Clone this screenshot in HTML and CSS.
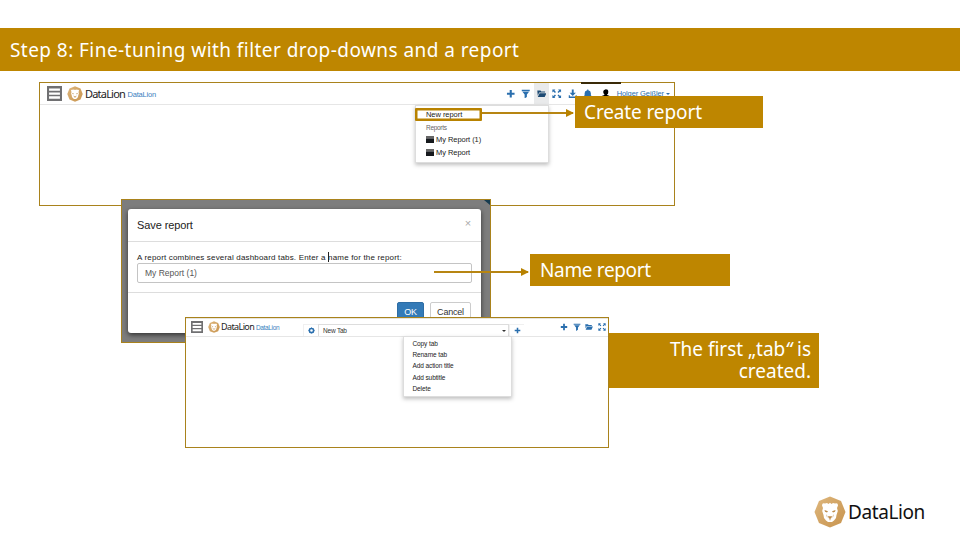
FILE: index.html
```html
<!DOCTYPE html>
<html lang="en">
<head>
<meta charset="utf-8">
<title>Step 8: Fine-tuning with filter drop-downs and a report</title>
<link rel="stylesheet" href="styles.css">
</head>
<body>
<svg class="defs" width="0" height="0" aria-hidden="true">
  <defs>
    <linearGradient id="gold" x1="0" y1="0" x2="1" y2="1">
      <stop offset="0" stop-color="#dfb87e"/><stop offset=".5" stop-color="#d2a464"/><stop offset="1" stop-color="#c99550"/>
    </linearGradient>
  </defs>
  <symbol id="lion" viewBox="0 0 32 32">
    <path fill="url(#gold)" d="M16 .5 27 5l4.500 11L27 27l-11 4.500L5 27 .5 16 5 5z"/>
    <path fill="#fff" d="M8 9.500Q8 6.500 11 7.500L13 7l1.500 1L16 6.800 17.500 8 19 7l2 .5q3-1 3 2l-1 2.500.8 3-1.300 4-.5 3-2 2.500L18 26h-4l-2-1.500L10 22l-.5-3-1.300-4 .8-3z"/>
    <path fill="#bd8b4a" d="m10.500 14 3.500 1.300-1 1.200-2-.7zm11 0L18 15.300l1 1.200 2-.7zM13.800 20.300h4.400l-1.200 2.200h-2zM15.600 22h.8v2.200h-.8zM12.300 18l1 2-.2 2zm7.400 0-1 2 .2 2z"/>
  </symbol>
  <symbol id="menu" viewBox="0 0 16 16">
    <path fill="#707072" d="M0 0h16v16H0z"/><path fill="#fff" d="M2.200 2.600h11.600v2.500H2.200zM2.200 6.800h11.600v2.500H2.200zM2.200 11h11.600v2.500H2.200z"/>
  </symbol>
  <symbol id="plus" viewBox="0 0 10 10"><path d="M3.900 1h2.200v2.900H9v2.200H6.100V9H3.900V6.100H1V3.900h2.900z"/></symbol>
  <symbol id="filter" viewBox="0 0 10 10"><path d="M.8.800h8.400v1.500H.8zM1.500 2.900h7L6.200 5.700v2.800L3.800 9.900V5.700z"/></symbol>
  <symbol id="folder" viewBox="0 0 10 10"><path d="M.3 1.500h3.400l.8 1h4v1.300H2.300L.8 7zM2.700 4.500h7.200L8.100 8.500H.8z"/></symbol>
  <symbol id="expand" viewBox="0 0 10 10"><path d="M.4.4h3.200L2.600 1.500l1.600 1.600-1.100 1.100-1.600-1.600L.4 3.600zM9.600.4H6.400l1 1.100-1.600 1.600 1.100 1.100 1.600-1.600 1.100 1zM.4 9.600h3.200l-1-1.100 1.600-1.600-1.100-1.100-1.600 1.600-1.100-1zM9.600 9.600H6.400l1-1.100-1.600-1.600 1.100-1.100 1.600 1.600 1.100-1z"/></symbol>
  <symbol id="download" viewBox="0 0 10 10"><path d="M4 .5h2V4h2.300L5 7.300 1.700 4H4zM.8 6.500H2V8h6V6.500h1.200v3H.8z"/></symbol>
  <symbol id="bell" viewBox="0 0 10 10"><path d="M4.400.5h1.200v.8Q8.300 1.800 8.300 4.500v2L9.500 8H.5l1.200-1.500v-2q0-2.700 2.700-3.200zM4 8.500h2L5 9.700z"/></symbol>
  <symbol id="user" viewBox="0 0 10 10"><path d="M5 .2q2.700 0 2.700 2.600T6.500 5.600v.6q3.500.6 3.500 3.400H0q0-2.800 3.500-3.400v-.6Q2.300 4.700 2.300 2.800T5 .2z"/></symbol>
  <symbol id="gear" viewBox="0 0 10 10"><circle cx="5" cy="5" r="3" fill="none" stroke="currentColor" stroke-width="2.200"/><path fill="none" stroke="currentColor" d="M5 .4v1M5 8.600v1M.4 5h1M8.600 5h1M1.700 1.700l.8.8M7.500 7.500l.8.8M8.300 1.700l-.8.8M1.700 8.300l.8-.8"/></symbol>
  <symbol id="board" viewBox="0 0 8 7"><path fill="#666" d="M0 0h8v2H0z"/><path fill="#16191d" d="M0 2.300h8V7H0z"/></symbol>
</svg>

<main class="slide">
  <h1 class="title"><span>Step 8: Fine-tuning with filter drop-downs and a report</span></h1>

  <section class="shot shot-menu">
    <header class="bar">
      <svg class="burger"><use href="#menu"/></svg>
      <svg class="lion"><use href="#lion"/></svg>
      <span class="brand">DataLion</span>
      <span class="project">DataLion</span>
      <nav class="tools">
        <i><svg><use href="#plus"/></svg></i>
        <i><svg><use href="#filter"/></svg></i>
        <i class="active"><svg><use href="#folder"/></svg></i>
        <i><svg><use href="#expand"/></svg></i>
        <i><svg><use href="#download"/></svg></i>
        <i><svg><use href="#bell"/></svg></i>
        <i class="person"><svg><use href="#user"/></svg></i>
        <span class="user">Holger Geißler</span><b class="caret"></b>
      </nav>
    </header>
    <span class="notch"></span>
    <ul class="menu reports">
      <li class="new">New report</li>
      <li class="head">Reports</li>
      <li><svg><use href="#board"/></svg>My Report (1)</li>
      <li><svg><use href="#board"/></svg>My Report</li>
    </ul>
  </section>

  <section class="shot shot-dialog">
    <span class="corner"></span>
    <div class="dialog">
      <header><span>Save report</span><b>×</b></header>
      <div class="body">
        <label>A report combines several dashboard tabs. Enter a <em></em>name for the report:</label>
        <div class="field">My Report (1)</div>
      </div>
      <footer><span class="btn ok">OK</span><span class="btn">Cancel</span></footer>
    </div>
  </section>

  <section class="shot shot-tab">
    <header class="bar">
      <svg class="burger"><use href="#menu"/></svg>
      <svg class="lion"><use href="#lion"/></svg>
      <span class="brand">DataLion</span>
      <span class="project">DataLion</span>
      <span class="cell"><svg><use href="#gear"/></svg></span>
      <div class="select"><span>New Tab</span><b class="caret"></b></div>
      <span class="cell add"><svg><use href="#plus"/></svg></span>
      <nav class="tools">
        <i><svg><use href="#plus"/></svg></i>
        <i><svg><use href="#filter"/></svg></i>
        <i><svg><use href="#folder"/></svg></i>
        <i><svg><use href="#expand"/></svg></i>
      </nav>
    </header>
    <ul class="menu tabs">
      <li>Copy tab</li><li>Rename tab</li><li>Add action title</li><li>Add subtitle</li><li>Delete</li>
    </ul>
  </section>

  <span class="highlight"></span>
  <span class="arrow arrow-create"></span>
  <span class="arrow arrow-name"></span>
  <div class="callout create"><span>Create report</span></div>
  <div class="callout name"><span>Name report</span></div>
  <div class="callout first"><span>The first „tab<q>“</q> is<br>created.</span></div>

  <footer class="logo"><svg><use href="#lion"/></svg><span>DataLion</span></footer>
</main>
</body>
</html>
```
FILE: styles.css
```css
* { box-sizing: border-box; }
body { margin: 0; background: #fff; }
.defs { position: absolute; }
.slide {
  position: relative;
  width: 960px; height: 540px;
  padding-top: 28px;
  overflow: hidden;
  font-family: "Liberation Sans", Arial, sans-serif;
  white-space: nowrap;
}
.title {
  display: flex; align-items: center;
  height: 43px; margin: 0; padding: 2px 0 0 10px;
  background: #be8600; color: #fff;
  font: 400 19px/41px "Noto Sans", sans-serif;
  letter-spacing: .44px;
}
.shot { position: absolute; border: 1px solid #a9821c; background: #fff; }
.shot-menu { left: 39px; top: 82px; width: 636px; height: 124px; }
.shot-dialog { left: 121px; top: 199px; width: 370px; height: 144px; background: #7d7d7d; overflow: hidden; }
.shot-tab { left: 185px; top: 317px; width: 424px; height: 131px; }

.bar { display: flex; align-items: center; height: 22px; border-bottom: 1px solid #e6e6e6; padding-left: 7px; }
.bar > * { flex-shrink: 0; }
.burger { width: 15px; height: 15px; }
.lion { width: 16px; height: 16px; margin-left: 5px; }
.brand { margin-left: 2px; color: #222; font: 11px/14px "Noto Sans", sans-serif; letter-spacing: -.8px; width: 42.500px; }
.project { color: #3b7fc0; font-size: 7.500px; letter-spacing: -.2px; padding-top: 1px; }
.tools { display: flex; align-items: center; height: 100%; margin-left: auto; color: #2a6fae; }
.tools i { display: flex; align-items: center; justify-content: center; width: 15.500px; height: 100%; }
.tools svg { width: 9.500px; height: 9.500px; fill: currentColor; }
.tools .active { background: #e9eaeb; color: #1d4a73; }
.tools .person { width: 21px; color: #000; }
.user { font-size: 7.500px; letter-spacing: -.1px; }
.caret { width: 0; height: 0; border: 2px solid transparent; border-top: 2.500px solid currentColor; border-bottom: 0; margin: 1px 4px 0 2px; }
.notch { position: absolute; left: 541px; top: -1px; width: 40px; height: 1.500px; background: #3a2a08; }

.menu {
  position: absolute; margin: 0; padding: 0; list-style: none;
  background: #fff; border: 1px solid #ddd;
  box-shadow: 0 2px 4px rgba(0,0,0,.25);
  color: #222; font-size: 7.500px;
}
.reports { left: 375px; top: 22px; width: 134px; height: 58px; padding: 2px 0 0 10px; }
.reports li { display: flex; align-items: center; height: 13px; letter-spacing: -.05px; }
.reports .new { height: 13px; }
.reports .head { font-size: 6.500px; color: #666; height: 12px; letter-spacing: -.3px; }
.reports svg { width: 8px; height: 7px; margin-right: 2px; }

.dialog {
  width: 353px; height: 124px; margin: 9px 0 0 6px;
  background: #fff; border-radius: 3px; box-shadow: 0 2px 5px rgba(0,0,0,.6);
  color: #222; font-size: 8px;
}
.dialog header { display: flex; justify-content: space-between; height: 33px; padding: 9px 10px 0 9px; border-bottom: 1px solid #ddd; font-size: 11px; line-height: 15px; letter-spacing: -.1px; }
.dialog header b { color: #aaa; font-weight: 400; line-height: 10px; }
.body { height: 51px; padding: 10px 9px 0; border-bottom: 1px solid #ddd; }
.body label { display: block; line-height: 10px; letter-spacing: .175px; }
.body em { display: inline-block; width: 1px; height: 10px; margin-right: -1px; background: #222; vertical-align: -2px; }
.field { height: 20px; border: 1px solid #c4c4c4; border-radius: 2px; padding-left: 7px; line-height: 18px; font-size: 8.500px; color: #555; }
.dialog footer { display: flex; justify-content: flex-end; gap: 6px; padding: 9px 10px 0; }
.btn { height: 20px; width: 41px; border: 1px solid #ccc; border-radius: 2px; text-align: center; font-size: 9px; line-height: 19px; color: #333; letter-spacing: -.2px; }
.btn.ok { width: 27px; background: #337ab7; border-color: #2e6da4; color: #fff; }
.corner { position: absolute; right: 0; top: 0; width: 6px; height: 5px; background: #173c50; clip-path: polygon(0 0,100% 0,100% 100%,60% 60%); }

.shot-tab .bar { height: 19px; padding-left: 5px; box-shadow: inset 0 1px #e6e4de; }
.shot-tab .burger { width: 12px; height: 12px; }
.shot-tab .lion { width: 12px; height: 12px; }
.shot-tab .brand { margin-left: 1px; width: 35px; font-size: 9px; letter-spacing: -.6px; }
.shot-tab .project { font-size: 6.500px; width: 47px; letter-spacing: -.35px; }
.cell { display: flex; align-items: center; justify-content: center; width: 15px; height: 12px; align-self: flex-end; color: #2a6fae; border: 1px solid #f0f0f0; border-width: 1px 0 0 1px; }
.cell svg { width: 7px; height: 7px; fill: currentColor; }
.select { display: flex; align-items: center; justify-content: space-between; align-self: flex-end; width: 191px; height: 12px; border: 1px solid #ddd; border-bottom: 0; padding-left: 4px; color: #333; font-size: 6.500px; letter-spacing: -.2px; }
.select .caret { margin-right: 2px; }
.shot-tab .tools i { width: 12.500px; }
.shot-tab .tools svg { width: 8px; height: 8px; }
.tabs { left: 217px; top: 18px; width: 109px; height: 61px; padding: 1px 0 0 8.500px; font-size: 6.500px; }
.tabs li { height: 11.200px; line-height: 11.200px; letter-spacing: -.1px; }

.highlight { position: absolute; left: 415px; top: 108px; width: 67px; height: 13px; border: 2px solid #b88200; border-radius: 1px; box-shadow: inset 0 0 0 .5px #b88200; }
.arrow { position: absolute; height: 2px; background: #b78512; }
.arrow::after { content: ""; position: absolute; right: -1px; top: -3px; border: 4px solid transparent; border-left: 8px solid #b88200; border-right: 0; }
.arrow-create { left: 482px; top: 112px; width: 91px; }
.arrow-name { left: 434px; top: 271px; width: 94px; }
.callout { position: absolute; background: #be8600; color: #fff; font: 19px/32px "Noto Sans", sans-serif; }
.create { left: 575px; top: 96px; width: 188px; height: 32px; padding-left: 9px; letter-spacing: -.12px; }
.name { left: 530px; top: 254px; width: 200px; height: 32px; padding-left: 10px; letter-spacing: -.35px; }
.first { left: 609px; top: 333px; width: 210px; height: 55px; padding: 5px 8px 0 0; text-align: right; line-height: 22px; }
.first q { font-style: italic; quotes: none; }
.logo { position: absolute; left: 814px; top: 496px; display: flex; align-items: center; gap: 2px; color: #111; font: 19px/32px "Noto Sans", sans-serif; letter-spacing: -.4px; }
.logo svg { width: 32px; height: 32px; }
```
